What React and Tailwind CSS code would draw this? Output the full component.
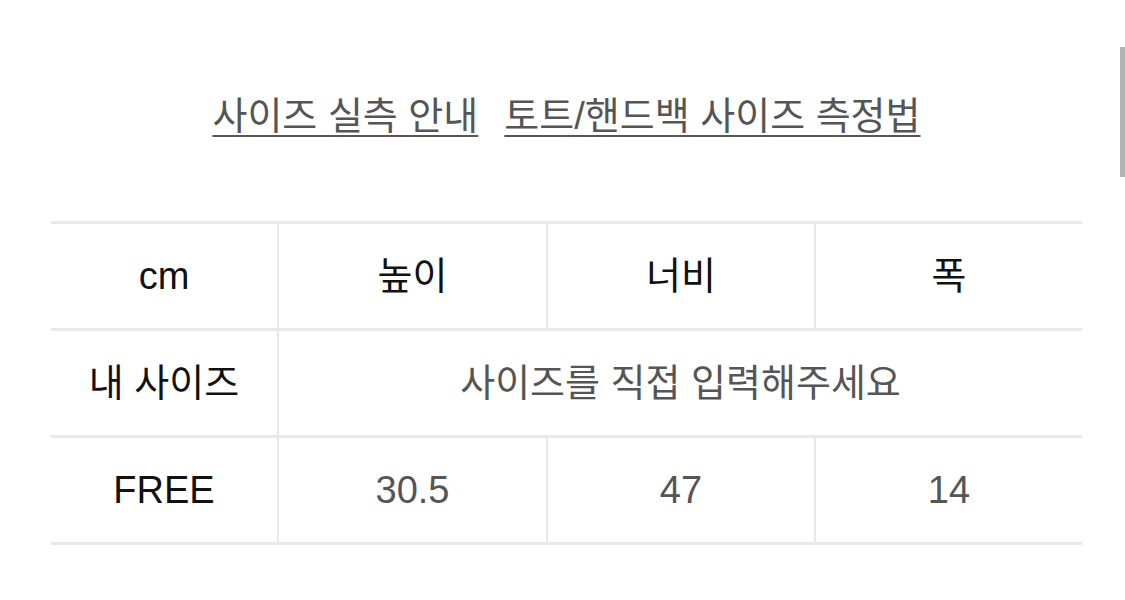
import React from "react";

const font = { fontFamily: '"Liberation Sans", "Noto Sans CJK KR", sans-serif' };

const rows = [
  { label: "cm", cells: ["높이", "너비", "폭"], dark: true },
  { label: "내 사이즈", span: "사이즈를 직접 입력해주세요" },
  { label: "FREE", cells: ["30.5", "47", "14"] },
];

export default function App() {
  return (
    <div className="relative h-[600px] w-[1125px] overflow-hidden bg-white" style={font}>
      <div className="w-[1031px] ml-[51px]">
        <div className="flex justify-center gap-[26px] pt-[92px] text-[38px] leading-[48px] text-[#555555]">
          <a className="underline decoration-2 underline-offset-[6px]">사이즈 실측 안내</a>
          <a className="underline decoration-2 underline-offset-[6px]">토트/핸드백 사이즈 측정법</a>
        </div>

        <div className="mt-[81px] border-t-[3px] border-[#e8e8e8]">
          {rows.map((r) => (
            <div key={r.label} className="grid grid-cols-[228px_269px_268px_266px] h-[107px] border-b-[3px] border-[#e8e8e8] text-[38px]">
              <div className="flex items-center justify-center border-r-2 border-[#e8e8e8] text-[#111111]">{r.label}</div>
              {r.span ? (
                <div className="col-span-3 flex items-center justify-center text-[#555555]">{r.span}</div>
              ) : (
                r.cells.map((c, i) => (
                  <div
                    key={c}
                    className={`flex items-center justify-center ${i < 2 ? "border-r-2 border-[#e8e8e8]" : ""} ${r.dark ? "text-[#111111]" : "text-[#555555]"}`}
                  >
                    {c}
                  </div>
                ))
              )}
            </div>
          ))}
        </div>
      </div>

      <div className="absolute right-0 top-[47px] h-[130px] w-[5px] bg-[#b3b3b3]" />
    </div>
  );
}
